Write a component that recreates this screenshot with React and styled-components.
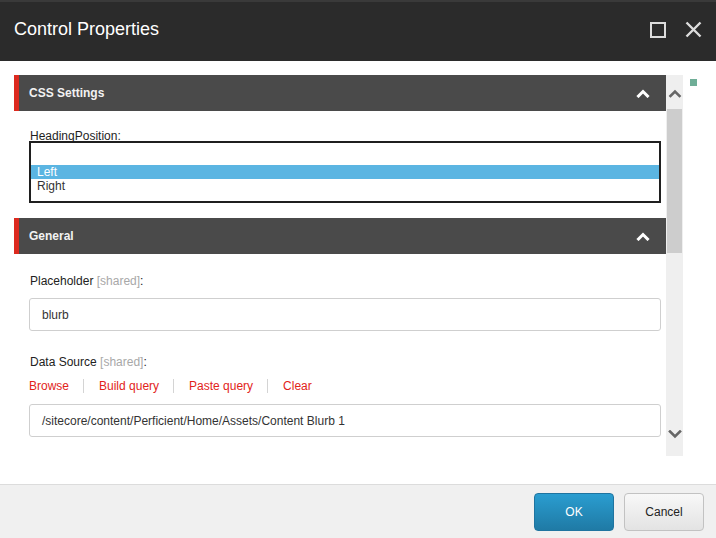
import React from 'react';
import styled, { createGlobalStyle } from 'styled-components';

const GlobalStyle = createGlobalStyle`
  html, body {
    margin: 0;
    padding: 0;
    background: #ffffff;
  }
  body {
    font-family: "Liberation Sans", Arial, sans-serif;
  }
  * {
    box-sizing: border-box;
  }
`;

const ChevronUp = ({ color = '#fff', width = 3 }) => (
  <svg width="14" height="9" viewBox="0 0 14 9">
    <polyline points="2.5,7 7,2.5 11.5,7" fill="none" stroke={color} strokeWidth={width} strokeLinecap="square" />
  </svg>
);

const ChevronDown = ({ color = '#666', width = 3 }) => (
  <svg width="14" height="9" viewBox="0 0 14 9">
    <polyline points="2,1.5 7,6.5 12,1.5" fill="none" stroke={color} strokeWidth={width} strokeLinecap="square" />
  </svg>
);

const App = () => {
  return (
    <>
      <GlobalStyle />
      <Dialog>
        <TitleBar>
          <Title>Control Properties</Title>
          <TitleActions>
            <IconButton aria-label="Maximize">
              <svg width="16" height="16" viewBox="0 0 16 16">
                <rect x="1" y="1" width="14" height="14" fill="none" stroke="#dcdcdc" strokeWidth="2" />
              </svg>
            </IconButton>
            <IconButton aria-label="Close">
              <svg width="17" height="17" viewBox="0 0 17 17">
                <path d="M1.5 1.5 L15.5 15.5 M15.5 1.5 L1.5 15.5" stroke="#dcdcdc" strokeWidth="2.4" />
              </svg>
            </IconButton>
          </TitleActions>
        </TitleBar>

        <Body>
          <ScrollPanel>
            <Content>
              <SectionHeader>
                <span>CSS Settings</span>
                <ChevronUp />
              </SectionHeader>
              <SectionBody $top={19} $bottom={15}>
                <TightLabel>HeadingPosition:</TightLabel>
                <ListBox>
                  <Option $blank />
                  <Option $selected>Left</Option>
                  <Option>Right</Option>
                </ListBox>
              </SectionBody>

              <SectionHeader>
                <span>General</span>
                <ChevronUp />
              </SectionHeader>
              <SectionBody $top={20} $bottom={20}>
                <Label>
                  Placeholder <Shared>[shared]</Shared>:
                </Label>
                <TextInput>blurb</TextInput>
                <Label $gap={24}>
                  Data Source <Shared>[shared]</Shared>:
                </Label>
                <LinkRow>
                  <LinkItem>Browse</LinkItem>
                  <Divider />
                  <LinkItem>Build query</LinkItem>
                  <Divider />
                  <LinkItem>Paste query</LinkItem>
                  <Divider />
                  <LinkItem>Clear</LinkItem>
                </LinkRow>
                <TextInput $gap={11}>/sitecore/content/Perficient/Home/Assets/Content Blurb 1</TextInput>
              </SectionBody>
            </Content>
            <ScrollBar>
              <ScrollButton $top>
                <ChevronUp color="#666" width={2.6} />
              </ScrollButton>
              <Thumb />
              <Track />
              <ScrollButton>
                <ChevronDown color="#666" width={2.6} />
              </ScrollButton>
            </ScrollBar>
          </ScrollPanel>
          <Marker />
        </Body>

        <Footer>
          <Button $primary>OK</Button>
          <Button>Cancel</Button>
        </Footer>
      </Dialog>
    </>
  );
};

const Dialog = styled.div`
  width: 716px;
  height: 538px;
  display: flex;
  flex-direction: column;
  background: #fff;
  overflow: hidden;
`;

const TitleBar = styled.div`
  height: 61px;
  flex-shrink: 0;
  border-top: 2px solid #3a3a3a;
  background: #2b2b2b;
  display: flex;
  align-items: center;
  justify-content: space-between;
  padding: 0 14px 4px 14px;
`;

const Title = styled.h1`
  margin: 0;
  font-size: 18px;
  font-weight: normal;
  color: #fff;
`;

const TitleActions = styled.div`
  display: flex;
  align-items: center;
  gap: 19px;
`;

const IconButton = styled.div`
  display: flex;
  align-items: center;
  justify-content: center;
  width: 17px;
  height: 17px;
`;

const Body = styled.div`
  flex: 1;
  display: flex;
  align-items: flex-start;
  padding: 14px 0 0 14px;
  border-bottom: 1px solid #dcdcdc;
`;

const ScrollPanel = styled.div`
  display: flex;
  height: 381px;
`;

const Content = styled.div`
  width: 652px;
  height: 381px;
  overflow: hidden;
`;

const SectionHeader = styled.div`
  height: 36px;
  display: flex;
  align-items: center;
  justify-content: space-between;
  background: #4a4a4a;
  border-left: 5px solid #dc2a1f;
  padding: 0 16px 0 10px;
  font-size: 12px;
  font-weight: bold;
  color: #f2f2f2;
`;

const SectionBody = styled.div`
  padding: ${(p) => p.$top}px 5px ${(p) => p.$bottom}px 15px;
`;

const TightLabel = styled.div`
  font-size: 12px;
  line-height: 13px;
  height: 11px;
  color: #1e1e1e;
  padding-left: 1px;
`;

const Label = styled.div`
  font-size: 12px;
  line-height: 14px;
  color: #222;
  padding-left: 1px;
  margin-top: ${(p) => p.$gap || 0}px;
`;

const Shared = styled.span`
  color: #a8a8a8;
`;

const ListBox = styled.div`
  position: relative;
  height: 62px;
  border: 2px solid #1f1f1f;
  display: flex;
  flex-direction: column;
  background: #fff;
`;

const Option = styled.div`
  height: ${(p) => (p.$blank ? 22 : 14)}px;
  flex-shrink: 0;
  line-height: 14px;
  font-size: 12px;
  padding-left: 6px;
  color: ${(p) => (p.$selected ? '#fff' : '#333')};
  background: ${(p) => (p.$selected ? '#5bb5e2' : 'transparent')};
`;

const TextInput = styled.div`
  margin-top: ${(p) => p.$gap || 10}px;
  height: 33px;
  border: 1px solid #cfcfcf;
  border-radius: 3px;
  display: flex;
  align-items: center;
  padding-left: 12px;
  font-size: 12px;
  color: #333;
`;

const LinkRow = styled.div`
  margin-top: 10px;
  display: flex;
  align-items: center;
  height: 14px;
`;

const LinkItem = styled.span`
  font-size: 12px;
  line-height: 14px;
  color: #e2231a;
`;

const Divider = styled.span`
  width: 1px;
  height: 14px;
  background: #d4d4d4;
  margin: 0 15px 0 14px;
`;

const ScrollBar = styled.div`
  width: 17px;
  height: 381px;
  background: #efefef;
  display: flex;
  flex-direction: column;
  align-items: center;
`;

const ScrollButton = styled.div`
  height: 34px;
  width: 100%;
  display: flex;
  justify-content: center;
  align-items: ${(p) => (p.$top ? 'center' : 'flex-start')};
  padding-top: ${(p) => (p.$top ? '2px' : '8px')};
`;

const Thumb = styled.div`
  width: 15px;
  height: 144px;
  flex-shrink: 0;
  background: #cdcdcd;
`;

const Track = styled.div`
  flex: 1;
`;

const Marker = styled.div`
  width: 7px;
  height: 7px;
  background: #6fae97;
  margin: 4px 0 0 7px;
`;

const Footer = styled.div`
  height: 53px;
  flex-shrink: 0;
  background: #f0f0f0;
  display: flex;
  justify-content: flex-end;
  align-items: flex-start;
  gap: 10px;
  padding: 8px 12px 0 0;
`;

const Button = styled.div`
  width: 80px;
  height: 38px;
  border-radius: 4px;
  display: flex;
  align-items: center;
  justify-content: center;
  font-size: 12px;
  color: ${(p) => (p.$primary ? '#fff' : '#222')};
  border: 1px solid ${(p) => (p.$primary ? '#1f74a0' : '#c2c2c2')};
  background: ${(p) =>
    p.$primary
      ? 'linear-gradient(to bottom, #2a9dd0, #1f7aa5)'
      : 'linear-gradient(to bottom, #f8f8f8, #e3e3e3)'};
`;

export default App;
